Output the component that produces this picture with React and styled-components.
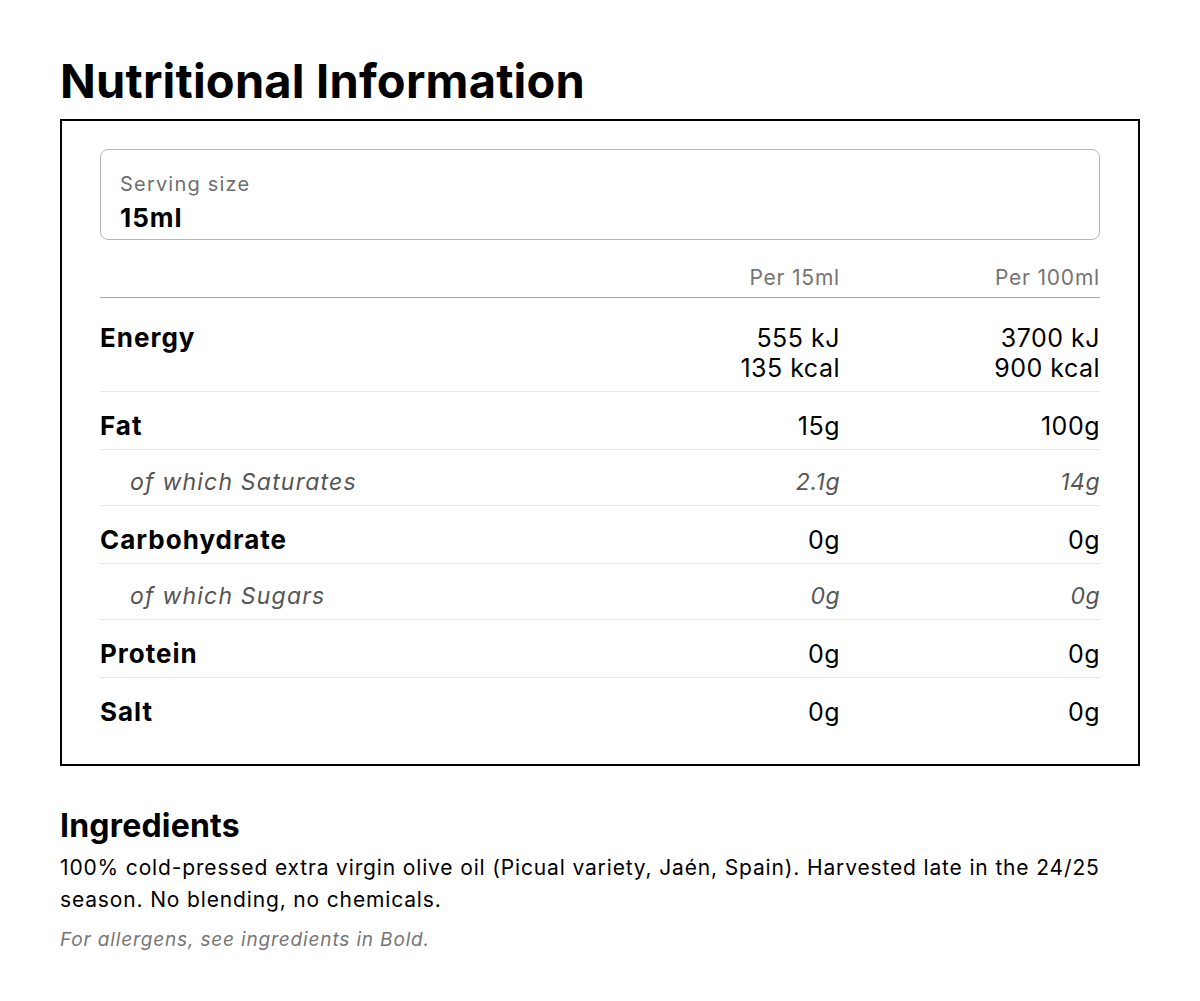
import React from 'react';
import styled, { createGlobalStyle } from 'styled-components';

const GlobalStyle = createGlobalStyle`
  body {
    margin: 0;
    background: #fff;
    font-family: Inter, "Noto Sans", sans-serif;
    color: #000;
  }
`;

const Page = styled.div`
  padding: 53px 60px 40px;
  width: 1080px;
`;

const Title = styled.h1`
  margin: 0 0 10px;
  font-size: 47px;
  line-height: 56px;
  font-weight: 700;
  letter-spacing: 0.2px;
`;

const Panel = styled.section`
  border: 2px solid #000;
  padding: 28px 38px;
`;

const ServingBox = styled.div`
  border: 1px solid #b8b8b8;
  border-radius: 8px;
  padding: 19px 19px 4px;
`;

const ServingLabel = styled.div`
  font-size: 20px;
  line-height: 30px;
  letter-spacing: 1.2px;
  color: #6f6f6f;
`;

const ServingValue = styled.div`
  margin-top: 2px;
  font-size: 26px;
  line-height: 34px;
  font-weight: 700;
  letter-spacing: 1px;
`;

const Row = styled.div`
  display: grid;
  grid-template-columns: 1fr 260px 260px;
  padding: ${p => (p.$sub ? '17px 0 8px' : p.$last ? '19px 0 9px' : '19px 0 8px')};
  border-bottom: ${p => (p.$last ? 'none' : '1px solid #e6e6e6')};
  line-height: 30px;
`;

const HeadRow = styled(Row)`
  margin-top: 23px;
  padding: 0 0 4px;
  border-bottom: 1px solid #a8a8a8;
  color: #747474;
  font-size: 21px;
  letter-spacing: 0.8px;
`;

const Body = styled.div`
  padding-top: 6px;
`;

const Label = styled.div`
  font-size: ${p => (p.$sub ? '23px' : '26px')};
  font-weight: ${p => (p.$sub ? 400 : 700)};
  font-style: ${p => (p.$sub ? 'italic' : 'normal')};
  letter-spacing: ${p => (p.$sub ? '1.2px' : '1px')};
  color: ${p => (p.$sub ? '#555' : '#000')};
  padding-left: ${p => (p.$sub ? '30px' : '0')};
`;

const Value = styled.div`
  text-align: right;
  font-size: ${p => (p.$sub ? '23px' : '25px')};
  font-style: ${p => (p.$sub ? 'italic' : 'normal')};
  letter-spacing: 0.5px;
  color: ${p => (p.$sub ? '#555' : '#000')};
`;

const HeadCell = styled.div`
  text-align: right;
`;

const Ingredients = styled.section`
  margin-top: 40px;
`;

const SubTitle = styled.h2`
  margin: 0 0 6px;
  font-size: 32px;
  line-height: 40px;
  font-weight: 700;
  letter-spacing: 0.2px;
`;

const Text = styled.p`
  margin: 0;
  font-size: 21px;
  line-height: 32px;
  letter-spacing: 0.85px;
`;

const Note = styled.p`
  margin: 9px 0 0;
  font-size: 19px;
  line-height: 30px;
  font-style: italic;
  letter-spacing: 0.85px;
  color: #767676;
`;

const rows = [
  { label: 'Energy', a: ['555 kJ', '135 kcal'], b: ['3700 kJ', '900 kcal'] },
  { label: 'Fat', a: ['15g'], b: ['100g'] },
  { label: 'of which Saturates', a: ['2.1g'], b: ['14g'], sub: true },
  { label: 'Carbohydrate', a: ['0g'], b: ['0g'] },
  { label: 'of which Sugars', a: ['0g'], b: ['0g'], sub: true },
  { label: 'Protein', a: ['0g'], b: ['0g'] },
  { label: 'Salt', a: ['0g'], b: ['0g'] },
];

export default function App() {
  return (
    <Page>
      <GlobalStyle />
      <Title>Nutritional Information</Title>
      <Panel>
        <ServingBox>
          <ServingLabel>Serving size</ServingLabel>
          <ServingValue>15ml</ServingValue>
        </ServingBox>
        <HeadRow>
          <div />
          <HeadCell>Per 15ml</HeadCell>
          <HeadCell>Per 100ml</HeadCell>
        </HeadRow>
        <Body>
          {rows.map((r, i) => (
            <Row key={r.label} $sub={r.sub} $last={i === rows.length - 1}>
              <Label $sub={r.sub}>{r.label}</Label>
              <Value $sub={r.sub}>
                {r.a.map(v => <div key={v}>{v}</div>)}
              </Value>
              <Value $sub={r.sub}>
                {r.b.map(v => <div key={v}>{v}</div>)}
              </Value>
            </Row>
          ))}
        </Body>
      </Panel>
      <Ingredients>
        <SubTitle>Ingredients</SubTitle>
        <Text>
          100% cold-pressed extra virgin olive oil (Picual variety, Jaén, Spain). Harvested late in the 24/25 season. No blending, no chemicals.
        </Text>
        <Note>For allergens, see ingredients in Bold.</Note>
      </Ingredients>
    </Page>
  );
}
